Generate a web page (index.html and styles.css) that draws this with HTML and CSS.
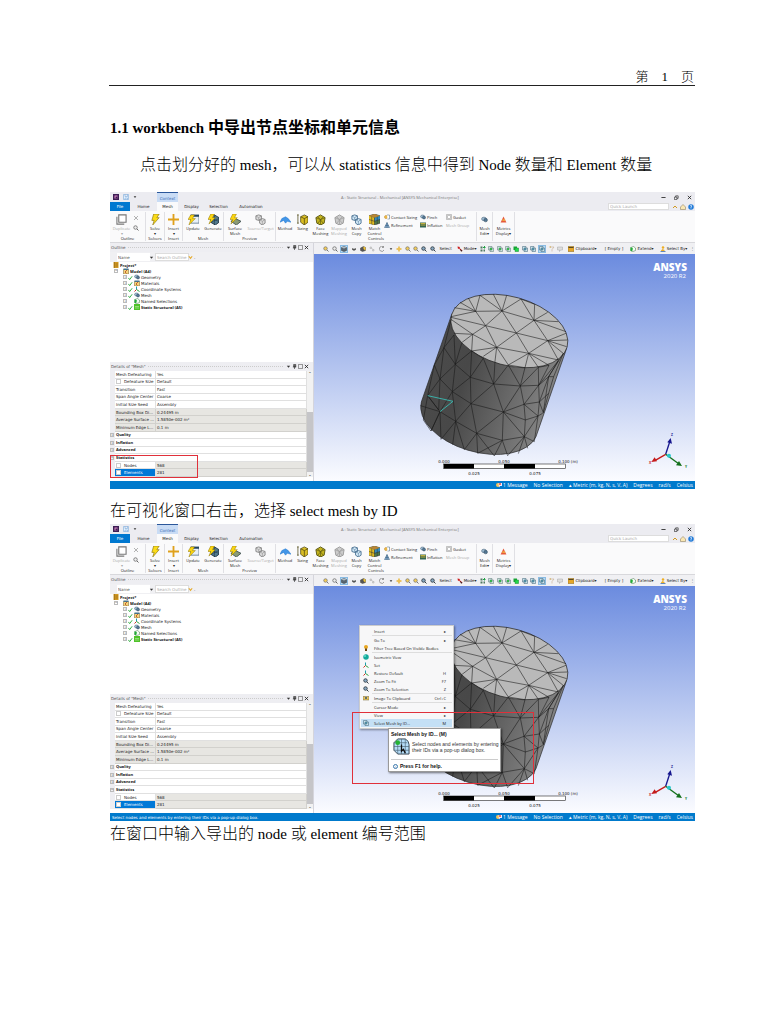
FILE: index.html
```html
<!DOCTYPE html>
<html lang="zh-CN">
<head>
<meta charset="utf-8">
<meta name="viewport" content="width=device-width, initial-scale=1">
<title>workbench 中导出节点坐标和单元信息</title>
<link rel="stylesheet" href="styles.css">
</head>
<body>
<svg class="sprite" aria-hidden="true">
  <defs>
    <linearGradient id="sky" x1="0" y1="0" x2="0" y2="1"><stop offset="0" stop-color="#6b8bdf"/><stop offset="1" stop-color="#fbfcff"/></linearGradient>
    <linearGradient id="side" x1="0" y1="0" x2="1" y2="0.3"><stop offset="0" stop-color="#4c4c4c"/><stop offset=".4" stop-color="#484848"/><stop offset="1" stop-color="#858585"/></linearGradient>
    <symbol id="dup" viewBox="0 0 12 12"><path d="M3 1h8v8H3zM1 3v8h8" fill="#fff" stroke="#777" stroke-width="1.2"/></symbol>
    <symbol id="bolt" viewBox="0 0 12 12"><path d="M4 0h6L7.500 4H10L3 12 4.500 7H2z" fill="#fbdc18" stroke="#8a7410" stroke-width=".7"/></symbol>
    <symbol id="plus" viewBox="0 0 12 12"><path d="M6 0v12M0 6h12" stroke="#dfa11c" stroke-width="2"/></symbol>
    <symbol id="update" viewBox="0 0 12 12"><path d="M3 1h9v9H3z" fill="#e7f0f8" stroke="#49677e" stroke-width=".8"/><path d="M3 1h9v2H3z" fill="#24455f"/><path d="M3 1h4L5 5h3L1 12l2-6H0z" fill="#fbd510" stroke="#887000" stroke-width=".5"/></symbol>
    <symbol id="generate" viewBox="0 0 12 12"><path d="M3 3l4-2 5 3v5l-4 3-5-3z" fill="#527a8e" stroke="#203544"/><path d="M7 1v11M3 5l9 3M3 9l9-4" stroke="#203544" stroke-width=".6"/><path d="M3 0h4L5 4h3L1 11l2-5H0z" fill="#fbd510" stroke="#887000" stroke-width=".5"/></symbol>
    <symbol id="surface" viewBox="0 0 12 12"><path d="M1 8l5-3 6 3-5 4z" fill="#8b9b75" stroke="#455"/><path d="M3 0h4L5 4h3L1 11l2-5H0z" fill="#fbd510" stroke="#887000" stroke-width=".5"/></symbol>
    <symbol id="cubes" viewBox="0 0 12 12"><path d="M4 1l3 1v4L4 7 1 6V2zM8 5l3 1v4l-3 2-3-2V6z" fill="#ddd" stroke="#888"/><path d="M1 2l3 2 3-2M4 4v3M5 6l3 2 3-2M8 8v4" fill="none" stroke="#888" stroke-width=".6"/></symbol>
    <symbol id="copy" viewBox="0 0 12 12"><path d="M4 1l3 1v4L4 7 1 6V2zM8 5l3 1v4l-3 2-3-2V6z" fill="#d7ecfa" stroke="#4a7192"/><path d="M1 2l3 2 3-2M4 4v3M5 6l3 2 3-2M8 8v4" fill="none" stroke="#4a7192" stroke-width=".6"/></symbol>
    <symbol id="method" viewBox="0 0 12 12"><path d="M0 9l2-4 4-2 3 2 3 4-4-1-2 2-2-3z" fill="#4296e8" stroke="#1f72c8" stroke-width=".5"/></symbol>
    <symbol id="sizing" viewBox="0 0 12 12"><path d="M4 3l4-2 4 2v6l-4 3-4-3z" fill="#d9bd24" stroke="#4b4512" stroke-width=".8"/><path d="M4 3l4 2 4-2M8 5v7M1 1v9M0 1h2M0 10h2" stroke="#4b4512" stroke-width=".8" fill="none"/></symbol>
    <symbol id="face" viewBox="0 0 12 12"><path d="M6 1l5 3-1 6-4 2-4-2-1-6z" fill="#c3b41e" stroke="#5b5611"/><path d="M1 4l5 2 5-2M6 6v6M3 3l6 7M9 3l-6 7" fill="none" stroke="#5b5611" stroke-width=".7"/></symbol>
    <symbol id="mapped" viewBox="0 0 12 12"><path d="M6 1l5 3-1 6-4 2-4-2-1-6z" fill="#ccc" stroke="#999"/><path d="M1 4l5 2 5-2M6 6v6M3 3l6 7M9 3l-6 7" fill="none" stroke="#999" stroke-width=".7"/></symbol>
    <symbol id="match" viewBox="0 0 12 12"><path d="M0 2l6-2 6 2v8l-6 2-6-2z" fill="#4c7b4c" stroke="#333" stroke-width=".6"/><path d="M0 2l6 2v8l-6-2z" fill="#e1bb20"/><path d="M6 4l6-2v4L6 8z" fill="#318bc1"/><path d="M0 2l6-2 6 2-6 2z" fill="#b88435"/><path d="M0 6l6 2 6-2M3 3v8M9 3v8M6 4v8" fill="none" stroke="#333" stroke-width=".6"/></symbol>
    <symbol id="gem" viewBox="0 0 12 12"><ellipse cx="5" cy="5" rx="4" ry="3" fill="#9fbcd2" stroke="#46637b"/><circle cx="8" cy="7" r="3" fill="#547894" stroke="#324b60"/></symbol>
    <symbol id="tri" viewBox="0 0 12 12"><path d="M6 1l5 10H1z" fill="#e55a3b"/><path d="M4 7h5" stroke="#f6c844" stroke-width="2"/></symbol>
    <symbol id="bluetri" viewBox="0 0 12 12"><path d="M6 1l5 10H1zM6 1v10M3 7l6 0" fill="#85a9cd" stroke="#315878"/></symbol>
    <symbol id="contact" viewBox="0 0 12 12"><circle cx="4" cy="6" r="3" fill="#f6c54e" stroke="#b37716"/><path d="M6 2h5v8H7" fill="#fff" stroke="#42637d"/></symbol>
    <symbol id="box" viewBox="0 0 12 12"><path d="M1 1h10v10H1zM3 3h6v6H3z" fill="#fff" stroke="#888"/></symbol>
    <symbol id="inflation" viewBox="0 0 12 12"><path d="M0 1h12v10H0z" fill="#326452"/><path d="M1 3h10M1 6h10" stroke="#f3c737" stroke-width="1.5"/></symbol>
    <symbol id="glass" viewBox="0 0 12 12"><circle cx="5" cy="5" r="3.500" fill="#eee" stroke="#666" stroke-width="1.500"/><path d="M8 8l3 3" stroke="#666" stroke-width="2"/></symbol>
    <symbol id="glassy" viewBox="0 0 12 12"><circle cx="5" cy="5" r="3.500" fill="#f5cd55" stroke="#777" stroke-width="1.500"/><path d="M8 8l3 3" stroke="#777" stroke-width="2"/></symbol>
    <symbol id="glassd" viewBox="0 0 12 12"><circle cx="5" cy="5" r="3.500" fill="#89a9c2" stroke="#34404a" stroke-width="1.800"/><path d="M8 8l3 3" stroke="#34404a" stroke-width="2"/></symbol>
    <symbol id="cube" viewBox="0 0 12 12"><path d="M1 3l5-2 5 2v6l-5 2-5-2z" fill="#58656f" stroke="#333"/><path d="M1 3l5-2 5 2-5 2z" fill="#b3bcc4"/></symbol>
    <symbol id="cubey" viewBox="0 0 12 12"><path d="M1 4l6-3 4 2v6l-6 2-4-2z" fill="#555" stroke="#444"/><path d="M7 1l4 2v6L7 6z" fill="#f5c735"/></symbol>
    <symbol id="half" viewBox="0 0 12 12"><path d="M2 4h8v3c-2 3-6 3-8 0z" fill="#555"/><path d="M2 4h8l-2 2H4z" fill="#bbb"/></symbol>
    <symbol id="nodes" viewBox="0 0 12 12"><path d="M2 2h3v3H2zM7 7h3v3H7zM5 4l3 3" fill="#ddd" stroke="#aaa"/></symbol>
    <symbol id="rotate" viewBox="0 0 12 12"><path d="M9 2a5 5 0 1 0 1 6M9 0v3H6" fill="none" stroke="#777" stroke-width="1.400"/></symbol>
    <symbol id="pan" viewBox="0 0 12 12"><path d="M6 0l2 3H7v2h2V4l3 2-3 2V7H7v2h1l-2 3-2-3h1V7H3v1L0 6l3-2v1h2V3H4z" fill="#e9ae22"/></symbol>
    <symbol id="cursor" viewBox="0 0 12 12"><path d="M1 1l5 1-1 2 6 5-2 2-5-6-2 1z" fill="#cb1919"/><path d="M6 6l5 4-3 1z" fill="#222"/></symbol>
    <symbol id="filter" viewBox="0 0 12 12"><path d="M1 1h7v7H1zM4 4h7v7H4z" fill="#cee4df" stroke="#547772"/><path d="M4 4h4v4H4z" fill="#36b34c"/></symbol>
    <symbol id="filterb" viewBox="0 0 12 12"><path d="M1 1h7v7H1zM4 4h7v7H4z" fill="#cbe4ed" stroke="#365c70"/><path d="M4 4h4v4H4z" fill="#4f8ca2"/></symbol>
    <symbol id="quad" viewBox="0 0 12 12"><path d="M1 1h4v4H1zM1 7h4v4H1zM7 7h3v4H7z" fill="#517963"/><path d="M9 0v5M6 3h5" stroke="#20a044" stroke-width="2"/></symbol>
    <symbol id="green" viewBox="0 0 12 12"><path d="M1 1h7v7H1z" fill="#19a636"/><path d="M4 4h7v7H4z" fill="#24d94b" stroke="#168b2e"/></symbol>
    <symbol id="funnel" viewBox="0 0 12 12"><path d="M2 2h8L6 7v4" fill="none" stroke="#bd9d7b"/><path d="M1 1h3v2H1z" fill="#cba546"/></symbol>
    <symbol id="chat" viewBox="0 0 12 12"><path d="M1 2h10v6H7l-2 3V8H1z" fill="#ddd" stroke="#a5a5a5"/></symbol>
    <symbol id="folder" viewBox="0 0 12 12"><path d="M0 1h12v10H0z" fill="#e5a629" stroke="#84631c"/><path d="M1 3h10" stroke="#574720" stroke-width="2"/></symbol>
    <symbol id="extend" viewBox="0 0 12 12"><path d="M2 3l5-2 4 3v5l-5 2-5-2z" fill="#f4fff4" stroke="#3e6c42"/><path d="M1 2l5 3-2 6-3-2z" fill="#24ad39"/></symbol>
    <symbol id="person" viewBox="0 0 12 12"><circle cx="6" cy="3" r="2.500" fill="#efae23"/><path d="M2 9l3-3 4 2v2H2z" fill="#efae23"/><path d="M1 11h10" stroke="#3266ae" stroke-width="1.500"/></symbol>
    <symbol id="book" viewBox="0 0 12 12"><path d="M1 0h10v12H1z" fill="#d29820"/><path d="M3 0v12M5 4h5M5 8h5" stroke="#805d18"/></symbol>
    <symbol id="model" viewBox="0 0 12 12"><path d="M1 3h10v9H1z" fill="#f4d578" stroke="#756130"/><path d="M1 1h10v3H1z" fill="#45738e"/><path d="M8 4L4 8l3 3" fill="none" stroke="#b23b1c" stroke-width="1.500"/></symbol>
    <symbol id="axes" viewBox="0 0 12 12"><path d="M5 1v6" stroke="#1b9dad" stroke-width="2"/><path d="M5 7l-4 4" stroke="#d12d22" stroke-width="2"/><path d="M5 7l6 4" stroke="#2da642" stroke-width="2"/></symbol>
    <symbol id="static" viewBox="0 0 12 12"><path d="M0 0h12v12H0z" fill="#4fc229"/><path d="M2 5h8M2 8h8" stroke="#d7f7c6"/></symbol>
    <symbol id="check" viewBox="0 0 12 12"><path d="M1 7l3 4 6-8" fill="none" stroke="#12a525" stroke-width="2"/></symbol>
    <symbol id="bulb" viewBox="0 0 12 12"><circle cx="6" cy="4" r="4" fill="#e8a722"/><path d="M4 7h4v5H4z" fill="#684715"/></symbol>
    <symbol id="sphere" viewBox="0 0 12 12"><circle cx="6" cy="6" r="5.500" fill="#13a99b"/><circle cx="4" cy="4" r="2" fill="#62dfcb"/></symbol>
    <symbol id="eye" viewBox="0 0 12 12"><path d="M0 3h12v7H0z" fill="#e7c35e" stroke="#71653c"/><circle cx="6" cy="6" r="2" fill="#36566c"/></symbol>
    <symbol id="save" viewBox="0 0 12 12"><path d="M1 1h10v10H1zM4 1v4h5V1M4 11V8h5v3" fill="#e4f2ff" stroke="#6a9fd5"/></symbol>
    <symbol id="logo" viewBox="0 0 12 12"><path d="M0 0h12v12H0z" fill="#3d1e55"/><path d="M3 3h6v6H3z" fill="#e18ec9"/><path d="M5 5h4v4H5z" fill="#3d1e55"/></symbol>
    <symbol id="home" viewBox="0 0 12 12"><path d="M1 6l5-5 5 5v5H1z" fill="#f9e7b3" stroke="#7c6e4d"/></symbol>
    <symbol id="help" viewBox="0 0 12 12"><circle cx="6" cy="6" r="5.500" fill="#227bd8"/><path d="M4 4q3-3 4 0L6 6v2M6 9v1" fill="none" stroke="#fff" stroke-width="1.300"/></symbol>
    <symbol id="pin" viewBox="0 0 12 12"><path d="M4 1h5v6H4zM2 7h8M6 7v5" fill="#666" stroke="#333" stroke-width="1.500"/></symbol>
    <symbol id="max" viewBox="0 0 12 12"><path d="M1 1h10v10H1z" fill="none" stroke="#555" stroke-width="1.500"/></symbol>
    <symbol id="restore" viewBox="0 0 12 12"><path d="M1 5h6v6H1zM4 5V2h6v6H7" fill="none" stroke="#222" stroke-width="1.500"/></symbol>
    <symbol id="min" viewBox="0 0 12 12"><path d="M1 6h10" stroke="#222" stroke-width="2"/></symbol>
    <symbol id="x" viewBox="0 0 12 12"><path d="M2 2l8 8M10 2l-8 8" stroke="#222" stroke-width="2"/></symbol>
    <symbol id="xg" viewBox="0 0 12 12"><path d="M2 2l8 8M10 2l-8 8" stroke="#999" stroke-width="1.500"/></symbol>
    <symbol id="down" viewBox="0 0 12 12"><path d="M2 4h8l-4 5z" fill="#333"/></symbol>
    <symbol id="vee" viewBox="0 0 12 12"><path d="M2 3l4 5 4-5" fill="none" stroke="#e5a928" stroke-width="2.500"/></symbol>
    <symbol id="hat" viewBox="0 0 12 12"><path d="M2 8l4-4 4 4" fill="none" stroke="#d29a22" stroke-width="2"/></symbol>
    <symbol id="msg" viewBox="0 0 12 12"><circle cx="4" cy="6" r="4" fill="#f4c45a"/><path d="M5 2h7v6H8l-2 3z" fill="#efeaff"/><circle cx="8" cy="4" r="2" fill="#df4b48"/></symbol>
    <symbol id="meshid" viewBox="0 0 18 18"><path d="M1 5l4-4h8q4 2 4 6v10H5l-4-4z" fill="#b5ddf8" stroke="#33434f"/><path d="M5 5v12M9 1v16M13 1v16M1 5h14M1 9h16M1 13h16" stroke="#4c6577" stroke-width=".7" fill="none"/><circle cx="5" cy="5" r="2.500" fill="#25b334"/><path d="M9 7v7l2-2 2 4" fill="none" stroke="#111" stroke-width="1.400"/></symbol>
  </defs>
</svg>

<template id="workbench">
  <div class="titlebar">
    <div class="quick"><svg><use href="#logo"/></svg><svg><use href="#save"/></svg><svg class="tiny"><use href="#down"/></svg></div>
    <span class="context">Context</span>
    <span class="app-title">A : Static Structural - Mechanical [ANSYS Mechanical Enterprise]</span>
    <div class="win-buttons"><button aria-label="Minimize"><svg><use href="#min"/></svg></button><button aria-label="Restore"><svg><use href="#restore"/></svg></button><button aria-label="Close"><svg><use href="#x"/></svg></button></div>
  </div>
  <div class="tabs">
    <button class="file">File</button><button>Home</button><button class="active">Mesh</button><button>Display</button><button>Selection</button><button>Automation</button>
    <span class="spacer"></span><input type="text" placeholder="Quick Launch" aria-label="Quick Launch">
    <div class="tab-icons"><svg><use href="#hat"/></svg><svg><use href="#home"/></svg><svg><use href="#help"/></svg></div>
  </div>
  <div class="ribbon">
    <section><div class="tools"><button class="dim"><svg><use href="#dup"/></svg>Duplicate<br>▾</button><span class="mini"><svg><use href="#xg"/></svg><svg><use href="#glass"/></svg></span></div><h3>Outline</h3></section>
    <section><div class="tools"><button><svg><use href="#bolt"/></svg>Solve<br>▾</button></div><h3>Solvers</h3></section>
    <section><div class="tools"><button><svg><use href="#plus"/></svg>Insert<br>▾</button></div><h3>Insert</h3></section>
    <section><div class="tools"><button><svg><use href="#update"/></svg>Update</button><button><svg><use href="#generate"/></svg>Generate</button></div><h3>Mesh</h3></section>
    <section><div class="tools"><button><svg><use href="#surface"/></svg>Surface<br>Mesh</button><button class="dim wide"><svg><use href="#cubes"/></svg>Source/Target</button></div><h3>Preview</h3></section>
    <section><div class="tools controls">
      <button><svg><use href="#method"/></svg>Method</button><button><svg><use href="#sizing"/></svg>Sizing</button><button><svg><use href="#face"/></svg>Face<br>Meshing</button><button class="dim"><svg><use href="#mapped"/></svg>Mapped<br>Meshing</button><button><svg><use href="#copy"/></svg>Mesh<br>Copy</button><button><svg><use href="#match"/></svg>Match<br>Control</button>
      <div class="stack"><button><svg><use href="#contact"/></svg>Contact Sizing</button><button><svg><use href="#bluetri"/></svg>Refinement</button></div>
      <div class="stack"><button><svg><use href="#gem"/></svg>Pinch</button><button><svg><use href="#inflation"/></svg>Inflation</button></div>
      <div class="stack"><button><svg><use href="#box"/></svg>Gasket</button><button class="dim">Mesh Group</button></div>
    </div><h3>Controls</h3></section>
    <section><div class="tools"><button class="small"><svg><use href="#gem"/></svg>Mesh<br>Edit▾</button></div></section>
    <section><div class="tools"><button class="small"><svg><use href="#tri"/></svg>Metrics<br>Display▾</button></div></section>
    <section class="rest"></section>
  </div>
  <div class="work">
    <aside class="left">
      <div class="pane-head"><span>Outline</span><i></i><svg><use href="#down"/></svg><svg><use href="#pin"/></svg><svg><use href="#max"/></svg><svg><use href="#x"/></svg></div>
      <div class="search"><select aria-label="Search by"><option>Name</option></select><svg><use href="#down"/></svg><input type="text" placeholder="Search Outline" aria-label="Search Outline"><svg><use href="#vee"/></svg><span>.</span></div>
      <ul class="tree">
        <li class="strong"><svg><use href="#book"/></svg>Project*</li>
        <li class="strong l1"><b class="ex">−</b><svg><use href="#model"/></svg>Model (A4)</li>
        <li class="l2"><b class="ex">+</b><svg class="tick"><use href="#check"/></svg><svg><use href="#gem"/></svg>Geometry</li>
        <li class="l2"><b class="ex">+</b><svg class="tick"><use href="#check"/></svg><svg><use href="#model"/></svg>Materials</li>
        <li class="l2"><b class="ex">+</b><svg class="tick"><use href="#check"/></svg><svg><use href="#axes"/></svg>Coordinate Systems</li>
        <li class="l2"><b class="ex">+</b><svg class="tick"><use href="#check"/></svg><svg><use href="#gem"/></svg>Mesh</li>
        <li class="l2"><b class="ex">+</b><span class="tick"></span><svg><use href="#extend"/></svg>Named Selections</li>
        <li class="l2 strong"><b class="ex">+</b><svg class="tick"><use href="#check"/></svg><svg><use href="#static"/></svg>Static Structural (A5)</li>
      </ul>
      <div class="grow"></div>
      <div class="pane-head"><span>Details of "Mesh"</span><i></i><svg><use href="#down"/></svg><svg><use href="#pin"/></svg><svg><use href="#max"/></svg><svg><use href="#x"/></svg></div>
      <div class="details">
        <table>
          <tr><td></td><th>Mesh Defeaturing</th><td>Yes</td></tr>
          <tr><td></td><th><label><input type="checkbox">Defeature Size</label></th><td>Default</td></tr>
          <tr><td></td><th>Transition</th><td>Fast</td></tr>
          <tr><td></td><th>Span Angle Center</th><td>Coarse</td></tr>
          <tr><td></td><th>Initial Size Seed</th><td>Assembly</td></tr>
          <tr class="ro all"><td></td><th>Bounding Box Di...</th><td>0.24495 m</td></tr>
          <tr class="ro all"><td></td><th>Average Surface ...</th><td>1.5850e-002 m²</td></tr>
          <tr class="ro all"><td></td><th>Minimum Edge L...</th><td>0.1 m</td></tr>
          <tr class="cat"><td><b class="ex">+</b></td><th colspan="2">Quality</th></tr>
          <tr class="cat"><td><b class="ex">+</b></td><th colspan="2">Inflation</th></tr>
          <tr class="cat"><td><b class="ex">+</b></td><th colspan="2">Advanced</th></tr>
          <tr class="cat"><td><b class="ex">−</b></td><th colspan="2">Statistics</th></tr>
          <tr class="ro"><td></td><th><label><input type="checkbox">Nodes</label></th><td>568</td></tr>
          <tr class="ro sel"><td></td><th><label><input type="checkbox">Elements</label></th><td>281</td></tr>
        </table>
        <div class="scroll"><span>⌃</span><i></i><span>⌄</span></div>
      </div>
    </aside>
    <main class="right">
      <div class="toolbar">
        <div class="first"><svg><use href="#glassy"/></svg><svg><use href="#glass"/></svg><svg class="on"><use href="#cube"/></svg><svg><use href="#half"/></svg><svg><use href="#cubey"/></svg></div>
        <div><svg><use href="#nodes"/></svg><svg><use href="#rotate"/></svg><svg class="tiny"><use href="#down"/></svg></div>
        <div><svg><use href="#pan"/></svg><svg><use href="#glassy"/></svg><svg><use href="#glassy"/></svg><svg><use href="#glassd"/></svg><svg><use href="#glassd"/></svg></div>
        <div><span>Select</span><button><svg><use href="#cursor"/></svg>Mode▾</button></div>
        <div><svg><use href="#quad"/></svg><svg><use href="#filter"/></svg><svg><use href="#filter"/></svg><svg><use href="#filter"/></svg><svg><use href="#green"/></svg><svg><use href="#filterb"/></svg><svg><use href="#filterb"/></svg><svg class="on"><use href="#filterb"/></svg><svg><use href="#funnel"/></svg><svg><use href="#chat"/></svg></div>
        <div><button><svg><use href="#folder"/></svg>Clipboard▾</button></div>
        <div><span>[ Empty ]</span></div>
        <div><button><svg><use href="#extend"/></svg>Extend▾</button></div>
        <div><button><svg><use href="#person"/></svg>Select By▾</button></div>
        <div><span>⋮</span></div>
      </div>
      <svg class="scene" viewBox="0 0 381 227" role="img" aria-label="Meshed cylinder">
        <rect width="381" height="227" fill="url(#sky)"/>
        <text class="brand" x="373" y="17" text-anchor="end">ANSYS</text>
        <text class="release" x="372" y="24" text-anchor="end">2020 R2</text>
        <g transform="translate(86 26) scale(.3333)" stroke-linejoin="round">
          <path d="M156 101L64 366A180 103 15.5 0 0 408 470L500 205Z" fill="url(#side)" stroke="#222" stroke-width="2"/>
          <ellipse cx="328" cy="153" rx="180" ry="103" transform="rotate(15.5 328 153)" fill="#b9b9b9" stroke="#222" stroke-width="2"/>
          <path class="mesh" d="M240 46L227 94L205 54M180 67L227 94L163 83M153 110L227 94L257 137L153 112M240 46L306 93L227 94M280 43L306 93L320 46M306 93L363 57L402 121L306 93L257 137M363 57L404 73L402 121L443 97M402 121L475 125M402 121L498 155M306 93L349 159L402 121L443 182L349 159L257 137L218 163L153 118M257 137L290 202L218 163L162 160M218 163L185 188M218 163L215 213L290 202L349 159L386 220L443 182L498 160M443 182L503 180M443 182L500 200M443 182L492 222M443 182L475 240L386 220L290 202L250 229M290 202L285 244M290 202L325 255L386 220L375 263M386 220L415 262M386 220L447 256"/>
          <path class="mesh" d="M153 120L132 203L166 253L162 165L132 203L120 297L166 253L215 213L211 292L166 253L157 335L120 297L83 347L103 255L120 297M185 190L166 253M215 213L250 235L211 292L281 312L285 244M250 235L281 312L325 255L361 318L281 312M325 255L375 263L361 318L415 262L416 316L361 318M415 262L447 256L416 316L475 242L446 290L416 316L418 366L446 290L490 220L461 290L446 340L418 366M132 203L103 255M211 292L157 335L213 371L211 292M281 312L213 371L310 396L281 312M361 318L310 396L372 373L361 318M416 316L372 373L418 366L430 398L446 340M461 290L446 290L430 398M157 335L120 395L83 347L116 390L120 297M157 335L167 424L120 395L61 377M120 395L93 453M120 395L123 478L167 424L158 494M167 424L213 371L230 460L167 424L193 509L230 460L233 520L307 481L230 460L310 396L307 481L373 470L310 396L376 420L372 373L414 408L376 420L373 470L414 408L418 366M307 481L283 528M307 481L323 527L373 470L355 521M373 470L383 505M373 470L403 485L414 408L428 400M230 460L283 528M83 347L70 420L93 453L120 395"/>
          <path d="M83 347L159 364L120 395" fill="none" stroke="#3bb0a8" stroke-width="3"/>
        </g>
        <g>
          <rect x="129.500" y="210" width="122" height="4.500" fill="#fff" stroke="#222" stroke-width=".6"/>
          <path d="M130 210h30v4.500h-30zM190 210h31v4.500h-31z" fill="#000"/>
          <g class="ticks" text-anchor="middle"><text x="130" y="209">0.000</text><text x="190" y="209">0.050</text><text x="254" y="209">0.100 (m)</text><text x="160" y="221">0.025</text><text x="221" y="221">0.075</text></g>
        </g>
        <g transform="translate(266 166) scale(.3333)" stroke-width="4">
          <path d="M257 103L269 66" stroke="#16168e"/><path d="M272 54l4 17-14-4z" fill="#16168e"/>
          <path d="M257 103L226 121" stroke="#c51a1a"/><path d="M214 126l10-14 7 12z" fill="#c51a1a"/>
          <path d="M257 103L294 130" stroke="#13701b"/><path d="M306 138l-18-2 9-13z" fill="#13701b"/>
          <circle cx="267" cy="107" r="6" fill="#27c7cf"/>
          <g class="axis"><text x="273" y="48" fill="#16168e">Z</text><text x="207" y="131" fill="#c51a1a">X</text><text x="315" y="143" fill="#13801b">Y</text></g>
        </g>
      </svg>
    </main>
  </div>
  <footer class="status"><span class="hint"></span><span><svg><use href="#msg"/></svg>1 Message</span><span>No Selection</span><span>▴ Metric (m, kg, N, s, V, A)</span><span>Degrees</span><span>rad/s</span><span>Celsius</span></footer>
</template>

<article class="page">
  <header class="page-head">第　1　页</header>
  <h1><span class="latin">1.1 workbench </span>中导出节点坐标和单元信息</h1>
  <p class="indent">点击划分好的<span class="latin"> mesh</span>，可以从<span class="latin"> statistics </span>信息中得到<span class="latin"> Node </span>数量和<span class="latin"> Element </span>数量</p>
  <div class="app"><div class="mark mark-stats"></div></div>
  <p>在可视化窗口右击，选择<span class="latin"> select mesh by ID</span></p>
  <div class="app" data-hint="Select nodes and elements by entering their IDs via a pop-up dialog box.">
    <div class="menu">
      <button><i></i><span>Insert</span><kbd>▸</kbd></button><hr>
      <button><i></i><span>Go To</span><kbd>▸</kbd></button>
      <button><svg><use href="#bulb"/></svg><span>Filter Tree Based On Visible Bodies</span></button><hr>
      <button><svg><use href="#sphere"/></svg><span>Isometric View</span></button>
      <button><svg><use href="#axes"/></svg><span>Set</span></button>
      <button><svg><use href="#axes"/></svg><span>Restore Default</span><kbd>H</kbd></button>
      <button><svg><use href="#glassd"/></svg><span>Zoom To Fit</span><kbd>F7</kbd></button>
      <button><svg><use href="#glassd"/></svg><span>Zoom To Selection</span><kbd>Z</kbd></button><hr>
      <button><svg><use href="#eye"/></svg><span>Image To Clipboard</span><kbd>Ctrl+C</kbd></button><hr>
      <button><i></i><span>Cursor Mode</span><kbd>▸</kbd></button>
      <button><i></i><span>View</span><kbd>▸</kbd></button>
      <button class="hover"><svg><use href="#filterb"/></svg><span>Select Mesh by ID...</span><kbd>M</kbd></button>
    </div>
    <div class="tip">
      <strong>Select Mesh by ID... (M)</strong>
      <div class="tip-body"><svg><use href="#meshid"/></svg><span>Select nodes and elements by entering<br>their IDs via a pop-up dialog box.</span></div>
      <div class="tip-foot"><em>i</em><strong>Press F1 for help.</strong></div>
    </div>
    <div class="mark mark-menu"></div>
  </div>
  <p class="last">在窗口中输入导出的<span class="latin"> node </span>或<span class="latin"> element </span>编号范围</p>
</article>
<script src="script.js"></script>
</body>
</html>
```
FILE: styles.css
```css
* { box-sizing: border-box; }
body { margin: 0; background: #fff; color: #000; font-family: "Liberation Serif", "Noto Sans CJK SC", serif; }
.sprite { position: absolute; width: 0; height: 0; }
.page { padding: 69px 73px 40px 109px; font-size: 16px; line-height: 20px; font-weight: 300; }
.page-head { border-bottom: 1px solid #222; height: 17px; line-height: 15px; font-size: 13px; text-align: right; padding-right: 1px; }
.page h1 { margin: 32px 0 17px 1px; font-size: 16px; line-height: 20px; font-weight: 700; }
.page p { margin: 12px 0 3px 1px; }
.page p.indent { margin: 0 0 17px; padding-left: 31px; white-space: nowrap; }
.page p.last { margin-top: 3px; }
.latin { font-size: 15px; }

.app { position: relative; margin: 0 0 0 1px; font: 400 4px/5px "DejaVu Sans", "Noto Sans", sans-serif; color: #222; background: #f0f0f3; }
.app button { font: inherit; color: inherit; background: none; border: 0; padding: 0; margin: 0; white-space: nowrap; }
.app input, .app select { font: inherit; color: #555; margin: 0; padding: 0 1px; border: 1px solid #ddd; background: #fff; appearance: none; min-width: 0; border-radius: 0; outline: 0; }
.app input::placeholder { color: #aaa; }
.app svg { display: block; flex: none; }
.app svg:not(.scene) { width: 6px; height: 6px; }

.titlebar { display: grid; grid-template-columns: 47fr 21fr 448fr 69fr; align-items: center; height: 10px; background: #ececf1; }
.quick { display: flex; gap: 4px; padding-left: 3px; align-items: center; }
.app svg.tiny { width: 4px; height: 4px; }
.context { height: 10px; line-height: 11px; text-align: center; background: #c9dcf5; color: #3d6db5; border-top: 1px solid #2b579a; }
.app-title { padding-left: 163px; color: #777; white-space: nowrap; font-family: "Open Sans", sans-serif; }
.win-buttons { display: flex; justify-content: flex-end; gap: 8px; padding-right: 3px; }
.app .win-buttons svg { width: 5px; height: 5px; }

.tabs { display: flex; align-items: stretch; height: 9px; background: #ececf1; }
.tabs button { flex: 0 0 27px; }
.app .tabs button.file { flex-basis: 20px; background: #0078d0; color: #fff; }
.app .tabs button.active { flex-basis: 21px; background: #fafafb; }
.tabs button:nth-child(6) { flex-basis: 38px; }
.spacer { flex: 1; }
.tabs input { width: 61px; height: 7px; align-self: center; }
.tab-icons { display: flex; gap: 2px; align-items: center; padding: 0 1px 0 3px; }

.ribbon { display: grid; grid-template-columns: 36fr 19fr 18fr 41fr 52fr 201fr 16fr 22fr 180fr; height: 32px; padding: 1px 0; background: #fafafb; border-bottom: 1px solid #d8d8dc; font-family: "Open Sans", sans-serif; }
.ribbon section { display: flex; flex-direction: column; border-right: 1px solid #e0e0e4; min-width: 0; }
.ribbon section.rest { border: 0; }
.ribbon h3 { margin: 0; font: inherit; text-align: center; }
.tools { flex: 1; display: flex; justify-content: space-around; align-items: flex-start; padding-top: 2px; }
.tools > button { flex: 1 1 0; min-width: 0; }
.tools > button.wide { flex-grow: 1.3; }
.app .tools > button { display: block; line-height: 5px; text-align: center; }
.app .tools > button svg { width: 11px; height: 11px; margin: 0 auto 1px; }
.app .tools > button.small svg { width: 7px; height: 7px; margin: 2px auto 3px; }
.app .dim { color: #aaa; }
.mini { display: grid; gap: 4px; padding: 1px 6px 0 0; }
.controls { display: grid; grid-template-columns: 18fr 17fr 19fr 18fr 17fr 19fr 36fr 26fr 30fr; }
.stack { display: grid; gap: 2px; }
.app .stack button { display: flex; align-items: center; gap: 1px; height: 6px; text-align: left; }

.work { display: grid; grid-template-columns: 204fr 381fr; }
.left { display: flex; flex-direction: column; background: #fff; border-right: 1px solid #d5d5dc; min-width: 0; }
.pane-head { display: flex; align-items: center; gap: 1px; height: 9px; padding: 0 4px 0 1px; background: #eeeef2; color: #555; }
.pane-head i { flex: 1; margin: 0 2px; border-top: 1px dotted #ccc; }
.app .pane-head svg { width: 5px; height: 5px; }
.search { display: flex; align-items: center; height: 10px; padding-left: 7px; background: #f0f0f3; }
.search select { width: 33px; height: 8px; border: 0; }
.app .search svg { width: 5px; height: 5px; margin: 0 1px 0 -1px; }
.search input { width: 34px; height: 8px; }
.tree { list-style: none; margin: 0; padding: 0 0 0 3px; display: grid; grid-auto-rows: 1fr; height: 46px; }
.tree li { display: flex; align-items: center; gap: 1px; }
.tree .l1 { padding-left: 1px; }
.tree .l2 { padding-left: 10px; }
.tree .l1 svg { margin-left: 4px; }
.app .tree .tick { width: 5px; height: 5px; }
.strong { font-weight: 700; color: #111; font-family: "Open Sans", sans-serif; }
.ex { width: 4px; height: 4px; border: 1px solid #bbb; font: 400 4px/2px "Open Sans", sans-serif; text-align: center; display: block; }
.grow { flex: 1; }
.details { display: grid; grid-template-columns: 1fr 6px; padding-bottom: 4px; }
.details table { width: 100%; height: 106px; border-collapse: separate; border-spacing: 0; table-layout: fixed; }
.details td, .details th { padding: 0 0 0 1px; border: 0 solid #e0e0e0; border-width: 0 1px 1px 0; font-weight: 400; text-align: left; line-height: 5px; white-space: nowrap; overflow: hidden; }
.details tr > td:first-child { width: 5px; background: #eeeef2; border: 0; padding: 0; }
.details th { width: 41px; }
.details .ro td:last-child, .details .all th { background: #e7e6e2; border-color: #d2d1cd; }
.details .cat th { font-weight: 700; color: #111; font-family: "Open Sans", sans-serif; }
.details label { display: flex; align-items: center; gap: 3px; height: 5px; }
.details input { width: 5px; height: 5px; border-color: #ccc; padding: 0; }
.details .sel th { background: #0078d7; color: #fff; }
.scroll { display: flex; flex-direction: column; align-items: center; background: #f2f2f2; }
.scroll i { width: 6px; height: 60px; margin-top: auto; background: #c5c5c8; }

.right { min-width: 0; }
.toolbar { display: grid; grid-template-columns: 47fr 28fr 42fr 42fr 85fr 37fr 26fr 30fr 33fr 5fr; height: 11px; padding-left: 6px; background: #f0f0f3; }
.toolbar div { display: flex; align-items: center; justify-content: space-around; min-width: 0; white-space: nowrap; }
.toolbar .first { padding-left: 2px; }
.toolbar button { display: flex; align-items: center; gap: 1px; }
.app .toolbar .on { width: 8px; height: 8px; padding: 1px; background: #b9dcf5; outline: 1px solid #8abbe2; outline-offset: -1px; }
.scene { width: 100%; height: auto; }
.brand { font: 800 10px "Open Sans", sans-serif; fill: #fff; }
.release { font: 400 6px "Open Sans", sans-serif; fill: #fff; }
.mesh { fill: none; stroke: #191919; stroke-width: 2; stroke-opacity: .85; }
.ticks { font: 4px "DejaVu Sans", sans-serif; fill: #111; }
.axis { font: 700 10px "Open Sans", sans-serif; stroke: none; }

.status { display: flex; align-items: center; gap: 6px; height: 8px; padding: 0 2px; color: #fff; background: #007acc; font-family: "Open Sans", sans-serif; font-size: 5px; white-space: nowrap; }
.status span { display: flex; align-items: center; gap: 1px; }
.status .hint { margin-right: auto; font-family: "DejaVu Sans", sans-serif; font-size: 4px; }

.mark { position: absolute; z-index: 3; border: 1px solid #e0303a; pointer-events: none; }
.mark-stats { left: 0; bottom: 11px; width: 88px; height: 23px; }
.mark-menu { left: 242px; top: 188px; width: 182px; height: 72px; }
.menu { position: absolute; z-index: 1; left: 249px; top: 101px; width: 95px; padding: 1px; background: #f7f7f8; border: 1px solid #ccc; box-shadow: 1px 1px 2px #0006; font-family: "Open Sans", sans-serif; }
.app .menu button { display: grid; grid-template-columns: 6px 1fr auto; gap: 5px; align-items: center; width: 100%; height: 8px; padding: 0 6px 0 2px; text-align: left; }
.menu kbd { font: inherit; }
.menu hr { margin: 0 0 0 11px; border: 0; border-top: 1px solid #ddd; }
.app .menu .hover { background: #c4e0f5; }
.tip { position: absolute; z-index: 2; left: 278px; top: 204px; width: 113px; padding: 2px; background: #fff; border: 1px solid #999; box-shadow: 1px 1px 2px #0008; font: 5px/6px "Liberation Sans", sans-serif; color: #333; }
.tip strong { display: block; font: 700 5px/6px "Liberation Sans", sans-serif; color: #111; }
.tip-body { display: flex; gap: 2px; align-items: center; padding: 1px 0 4px 2px; white-space: nowrap; }
.app .tip-body svg { width: 17px; height: 17px; }
.tip-foot { display: flex; align-items: center; gap: 2px; border-top: 1px solid #ccc; padding: 3px 2px 0; }
.tip-foot em { width: 5px; height: 5px; border: 1px solid #3b78ac; border-radius: 50%; font: 4px/3px "Open Sans", sans-serif; text-align: center; color: #3b78ac; }
```
FILE: script.js
```js
// Fill every application window from the shared template.
const shell = document.getElementById('workbench');
document.querySelectorAll('.app').forEach((app) => {
  app.prepend(shell.content.cloneNode(true));
  app.querySelector('.hint').textContent = app.dataset.hint || '';
});
```
